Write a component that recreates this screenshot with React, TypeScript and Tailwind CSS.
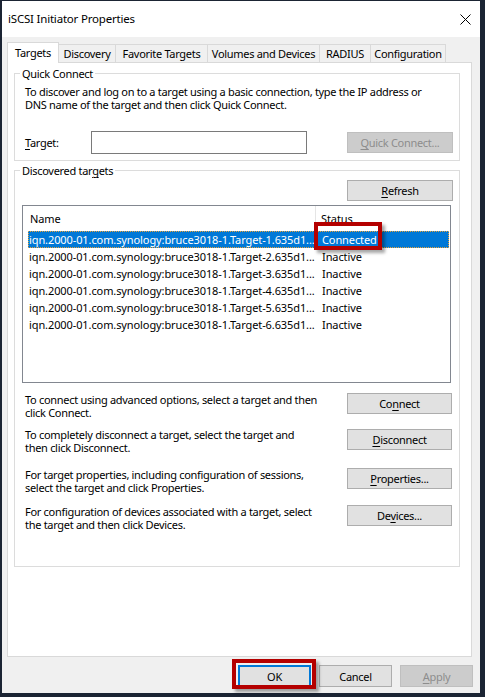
import React from "react";

function U({ children }: { children: React.ReactNode }) {
  return <span className="underline underline-offset-[2px] decoration-[1px]">{children}</span>;
}

function Btn({ children, className }: { children: React.ReactNode; className: string }) {
  return (
    <div className={"flex items-center justify-center border shrink-0 whitespace-nowrap " + className}>{children}</div>
  );
}

const rows = [1, 2, 3, 4, 5, 6];

export default function App() {
  return (
    <div className="w-[485px] h-[697px] bg-[#1b2433] pt-[1px] pl-[2px] font-['Noto_Sans',sans-serif] text-[11px] tracking-[-0.3px] text-black leading-none">
      <div className="w-[478px] h-[692px] bg-[#f0f0f0] flex flex-col">
        {/* Title bar */}
        <div className="h-[36px] bg-white flex items-center justify-between pl-[6px] pr-[9px] shrink-0">
          <span className="text-[11.5px] tracking-[-0.2px]">iSCSI Initiator Properties</span>
          <svg width="11" height="11" viewBox="0 0 11 11">
            <path d="M0.5 0.5 L10.5 10.5 M10.5 0.5 L0.5 10.5" stroke="#000" strokeWidth="1" />
          </svg>
        </div>

        <div className="pl-[5px] pt-[5px]">
          {/* Tabs */}
          <div className="flex items-end h-[20px] whitespace-nowrap">
            <div className="relative z-10 -mb-px h-[21px] w-[52px] bg-white border border-b-0 border-[#d9d9d9] flex items-center justify-center pb-[1px]">
              Targets
            </div>
            <div className="h-[18px] w-[57px] border border-l-0 border-b-0 border-[#d9d9d9] flex items-center justify-center">
              Discovery
            </div>
            <div className="h-[18px] w-[92px] border border-l-0 border-b-0 border-[#d9d9d9] flex items-center justify-center">
              Favorite Targets
            </div>
            <div className="h-[18px] w-[112px] border border-l-0 border-b-0 border-[#d9d9d9] flex items-center justify-center">
              Volumes and Devices
            </div>
            <div className="h-[18px] w-[51px] border border-l-0 border-b-0 border-[#d9d9d9] flex items-center justify-center">
              RADIUS
            </div>
            <div className="h-[18px] w-[75px] border border-l-0 border-b-0 border-[#d9d9d9] flex items-center justify-center">
              Configuration
            </div>
          </div>

          {/* Panel */}
          <div className="w-[465px] h-[595px] border border-[#d9d9d9] bg-white pl-[6px] pt-[10px]">
            {/* Quick Connect group */}
            <div className="relative w-[446px] h-[88px] border border-[#dcdcdc] pl-[10px] pt-[11px]">
              <div className="absolute left-[5px] -top-[7px] bg-white px-[2px] leading-[13px]">Quick Connect</div>
              <div className="leading-[13px] whitespace-nowrap">
                To discover and log on to a target using a basic connection, type the IP address or
                <br />
                DNS name of the target and then click Quick Connect.
              </div>
              <div className="flex items-center mt-[20px]">
                <div className="w-[66px]">
                  <U>T</U>arget:
                </div>
                <div className="w-[216px] h-[23px] border border-[#7a7a7a] bg-white" />
                <Btn className="ml-[40px] w-[106px] h-[21px] bg-[#cccccc] border-[#bfbfbf] text-[#8d8d8d]">
                  <span>
                    <U>Q</U>uick Connect...
                  </span>
                </Btn>
              </div>
            </div>

            {/* Discovered targets group */}
            <div className="relative mt-[9px] w-[446px] h-[397px] border border-[#dcdcdc]">
              <div className="absolute left-[5px] -top-[7px] bg-white px-[2px] leading-[13px]">
                Discovered tar<U>g</U>ets
              </div>
              <Btn className="mt-[9px] ml-[332px] w-[106px] h-[21px] bg-[#e1e1e1] border-[#adadad]">
                <span>
                  <U>R</U>efresh
                </span>
              </Btn>

              {/* List */}
              <div className="relative mt-[4px] ml-[7px] w-[429px] h-[178px] border border-[#828790] bg-white tracking-[-0.1px]">
                <div className="h-[25px] flex items-center">
                  <div className="w-[293px] h-full flex items-center pl-[7px] border-r border-[#e5e5e5]">Name</div>
                  <div className="pl-[5px]">Status</div>
                </div>
                <div className="ml-[5px] mr-[1px]">
                  {rows.map((n) => (
                    <div
                      key={n}
                      className={
                        n === 1
                          ? "h-[17px] flex items-center bg-[#0078d7] text-white border border-dotted border-[#e6a23c]"
                          : "h-[17px] flex items-center border border-transparent"
                      }
                    >
                      <div className="w-[293px] whitespace-nowrap">
                        {"iqn.2000-01.com.synology:bruce3018-1.Target-" + n + ".635d1..."}
                      </div>
                      <div>{n === 1 ? "Connected" : "Inactive"}</div>
                    </div>
                  ))}
                </div>
                <div className="absolute left-[291px] top-[16px] w-[68px] h-[28px] border-4 border-[#b40000] shadow-[3px_3px_3px_rgba(0,0,0,0.35)]" />
              </div>

              {/* Action rows */}
              <div className="flex items-start mt-[10px] pl-[10px]">
                <div className="w-[322px] leading-[13px] whitespace-nowrap">
                  To connect using advanced options, select a target and then
                  <br />
                  click Connect.
                </div>
                <Btn className="w-[105px] h-[21px] bg-[#e1e1e1] border-[#adadad]">
                  <span>
                    Co<U>n</U>nect
                  </span>
                </Btn>
              </div>
              <div className="flex items-start mt-[9px] pl-[10px]">
                <div className="w-[322px] leading-[13px] whitespace-nowrap">
                  To completely disconnect a target, select the target and
                  <br />
                  then click Disconnect.
                </div>
                <Btn className="mt-[1px] w-[105px] h-[21px] bg-[#e1e1e1] border-[#adadad]">
                  <span>
                    <U>D</U>isconnect
                  </span>
                </Btn>
              </div>
              <div className="flex items-start mt-[14px] pl-[10px]">
                <div className="w-[322px] leading-[13px] whitespace-nowrap">
                  For target properties, including configuration of sessions,
                  <br />
                  select the target and click Properties.
                </div>
                <Btn className="w-[105px] h-[21px] bg-[#e1e1e1] border-[#adadad]">
                  <span>
                    <U>P</U>roperties...
                  </span>
                </Btn>
              </div>
              <div className="flex items-start mt-[11px] pl-[10px]">
                <div className="w-[322px] leading-[13px] whitespace-nowrap">
                  For configuration of devices associated with a target, select
                  <br />
                  the target and then click Devices.
                </div>
                <Btn className="w-[105px] h-[21px] bg-[#e1e1e1] border-[#adadad]">
                  <span>
                    De<U>v</U>ices...
                  </span>
                </Btn>
              </div>
            </div>
          </div>
        </div>

        {/* Bottom buttons */}
        <div className="flex justify-end gap-[8px] pr-[7px] mt-[8px]">
          <div className="relative">
            <Btn className="w-[73px] h-[22px] bg-[#e1e1e1] border-2 border-[#0078d7]">OK</Btn>
            <div className="absolute -left-[6px] -right-[5px] -top-[6px] -bottom-[2px] border-4 border-[#b40000] shadow-[3px_3px_3px_rgba(0,0,0,0.35)]" />
          </div>
          <Btn className="w-[73px] h-[22px] bg-[#e1e1e1] border-[#adadad]">Cancel</Btn>
          <Btn className="w-[73px] h-[22px] bg-[#cccccc] border-[#bfbfbf] text-[#8d8d8d]">
            <span>
              <U>A</U>pply
            </span>
          </Btn>
        </div>
      </div>
    </div>
  );
}
